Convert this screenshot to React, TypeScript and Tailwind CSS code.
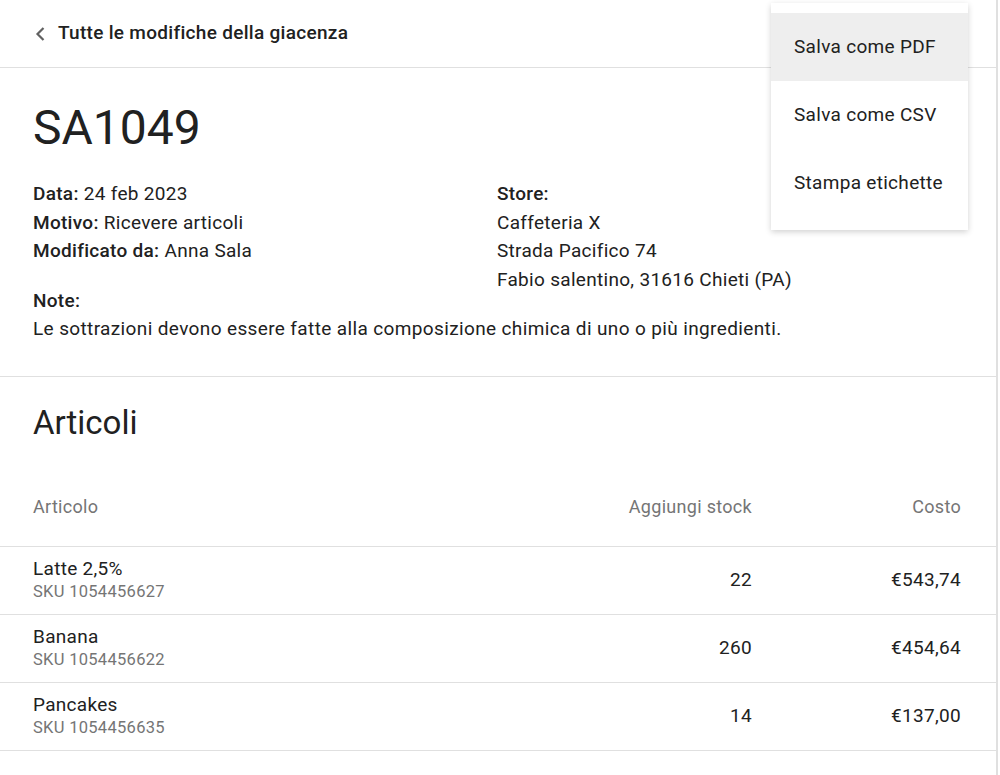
import React from "react";

const rows = [
  { name: "Latte 2,5%", sku: "SKU 1054456627", qty: "22", cost: "€543,74" },
  { name: "Banana", sku: "SKU 1054456622", qty: "260", cost: "€454,64" },
  { name: "Pancakes", sku: "SKU 1054456635", qty: "14", cost: "€137,00" },
];

export default function App() {
  return (
    <div className="relative w-[1000px] h-[775px] bg-white text-[#212121] overflow-hidden tracking-[0.3px]" style={{ fontFamily: "Roboto, 'Liberation Sans', sans-serif" }}>
      <div className="w-[998px] h-full border-r-2 border-[#e0e0e0]">
        <div className="h-[68px] flex items-center pl-[34px] border-b border-[#e0e0e0]">
          <svg width="13" height="16" viewBox="0 0 13 16" className="mr-[11px]">
            <path d="M9.5 2 L3.5 8 L9.5 14" fill="none" stroke="#616161" strokeWidth="2.2" />
          </svg>
          <span className="text-[19px] font-medium">Tutte le modifiche della giacenza</span>
        </div>

        <div className="px-[33px] pt-[32px] pb-[32px] border-b border-[#e0e0e0]">
          <h1 className="text-[48px] leading-[56px] font-normal tracking-normal">SA1049</h1>
          <div className="grid grid-cols-[464px_1fr] mt-[24px] text-[19px] leading-[28.5px]">
            <div>
              <div><span className="font-medium">Data:</span> 24 feb 2023</div>
              <div><span className="font-medium">Motivo:</span> Ricevere articoli</div>
              <div><span className="font-medium">Modificato da:</span> Anna Sala</div>
              <div className="mt-[21px]">
                <div className="font-medium">Note:</div>
                <div className="whitespace-nowrap tracking-[0.37px]">Le sottrazioni devono essere fatte alla composizione chimica di uno o più ingredienti.</div>
              </div>
            </div>
            <div>
              <div className="font-medium">Store:</div>
              <div>Caffeteria X</div>
              <div>Strada Pacifico 74</div>
              <div>Fabio salentino, 31616 Chieti (PA)</div>
            </div>
          </div>
        </div>

        <div className="px-[33px] pt-[26px]">
          <h2 className="text-[33px] leading-[40px] font-normal tracking-normal">Articoli</h2>
        </div>
        <div className="mt-[24px]">
          <div className="flex items-start h-[80px] pt-[28px] pl-[33px] pr-[35px] border-b border-[#e0e0e0] text-[18px] leading-[24px] text-[#757575]">
            <div className="flex-1">Articolo</div>
            <div className="w-[200px] text-right">Aggiungi stock</div>
            <div className="w-[209px] text-right">Costo</div>
          </div>
          {rows.map((r) => (
            <div key={r.sku} className="flex items-center h-[68px] pl-[33px] pr-[35px] border-b border-[#e0e0e0]">
              <div className="flex-1">
                <div className="text-[19px] leading-[24px]">{r.name}</div>
                <div className="text-[16.5px] leading-[22px] text-[#757575]">{r.sku}</div>
              </div>
              <div className="w-[200px] text-right text-[19px]">{r.qty}</div>
              <div className="w-[209px] text-right text-[19px]">{r.cost}</div>
            </div>
          ))}
        </div>
      </div>

      <div className="absolute left-[771px] top-[3px] w-[197px] bg-white pt-[10px] pb-[13px] shadow-[0_2px_6px_rgba(0,0,0,0.18)]">
        <div className="h-[68px] flex items-center px-[23px] bg-[#eeeeee] text-[19px]">Salva come PDF</div>
        <div className="h-[68px] flex items-center px-[23px] text-[19px]">Salva come CSV</div>
        <div className="h-[68px] flex items-center px-[23px] text-[19px]">Stampa etichette</div>
      </div>
    </div>
  );
}
